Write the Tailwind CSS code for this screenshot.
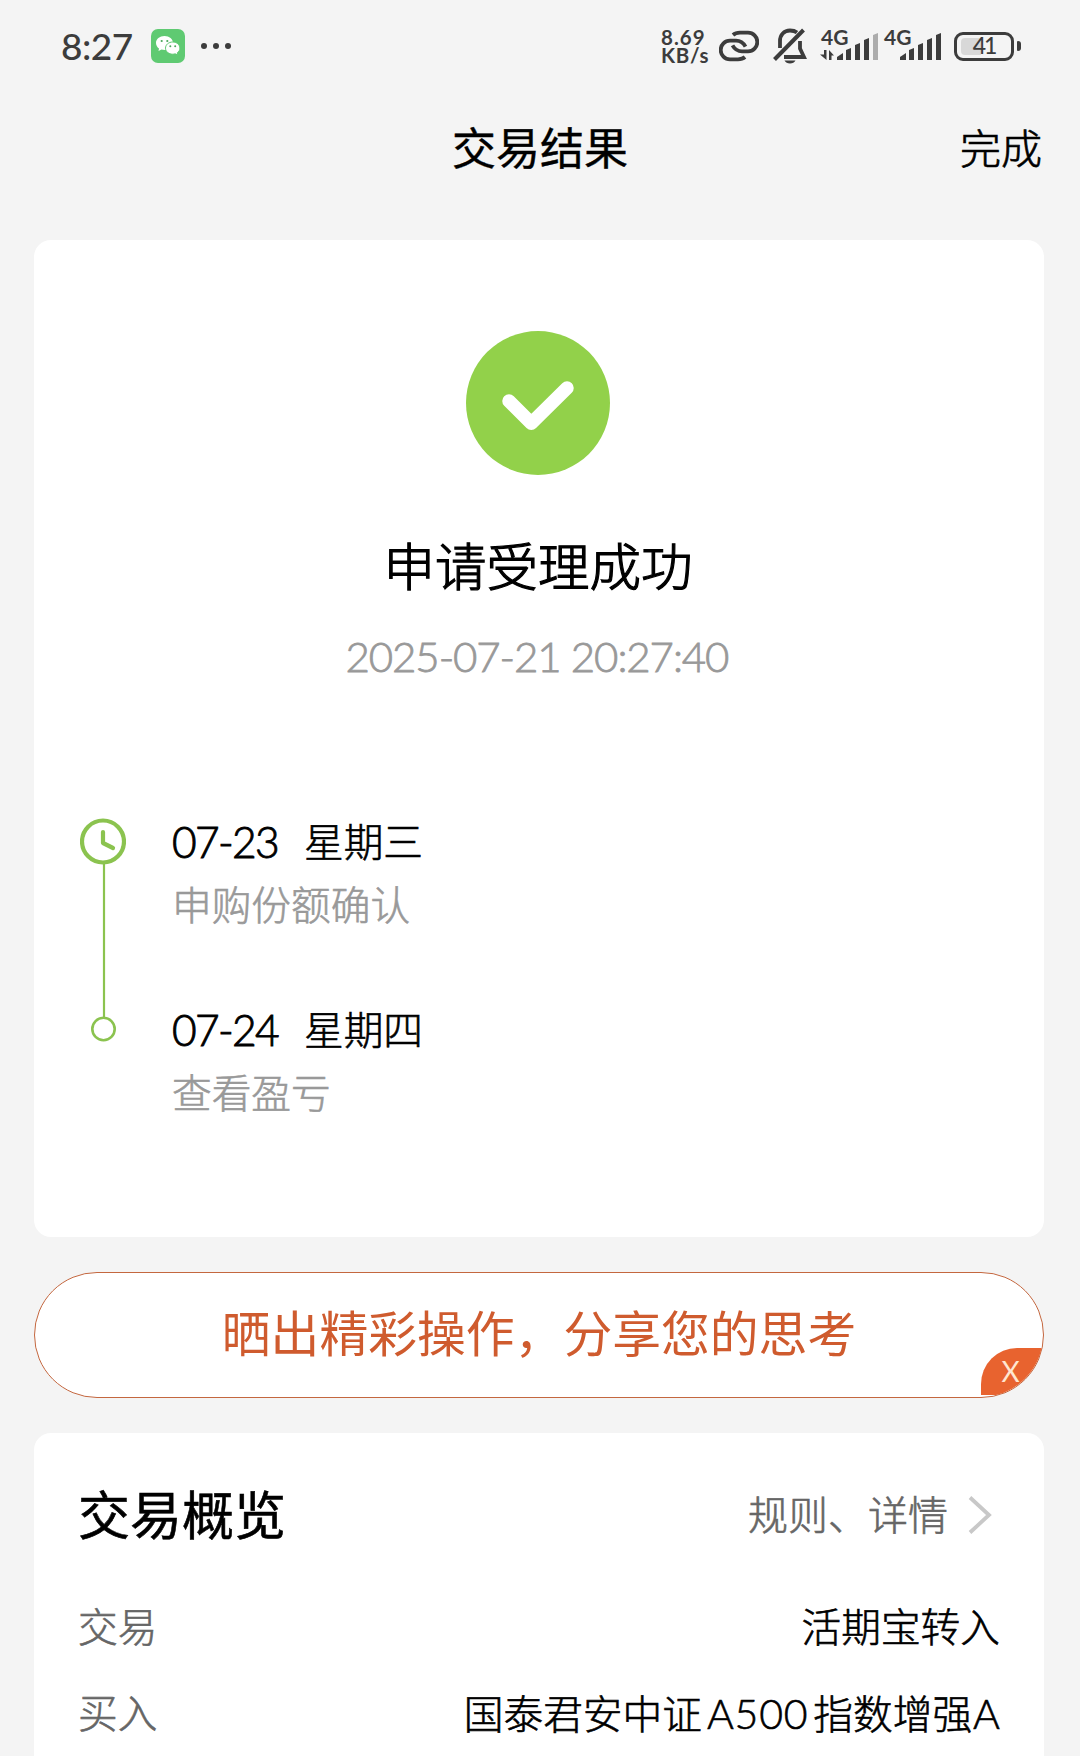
<!DOCTYPE html>
<html lang="zh-CN">
<head>
    <meta charset="UTF-8">
    <meta name="viewport" content="width=device-width, initial-scale=1.0">
    <title>交易结果</title>
    <script src="https://cdn.jsdelivr.net/npm/@tailwindcss/browser@4"></script>
</head>
<body class="bg-[#f4f4f4] text-black w-[1080px] h-[1756px] overflow-hidden font-light font-['Lato','Noto_Sans_CJK_SC',sans-serif]">

    <!-- Status bar -->
    <div class="h-[92px] pl-[61px] pr-[59px] flex items-center justify-between text-[#3c3c3c]">
        <div class="flex items-center">
            <span class="w-[90px] text-[37px] leading-none font-medium tracking-[-0.5px] -mt-[2px]">8:27</span>
            <svg class="w-[34px] h-[34px]" viewBox="0 0 34 34">
                <rect width="34" height="34" rx="7" fill="#5fca72"/>
                <path d="M13.5 7C8.700 7 5 10 5 14c0 2.200 1.200 4.200 3 5.500L7.500 22l3-1.500c1 .3 2 .4 3 .4 4.800 0 8.500-3 8.500-6.900S18.300 7 13.500 7z" fill="#fff"/>
                <path d="M21.700 13c-4 0-7.200 2.700-7.200 6.100s3.200 6.100 7.200 6.100c.9 0 1.800-.1 2.500-.4l2.600 1.400-.6-2.300c1.700-1.100 2.700-2.900 2.700-4.800 0-3.400-3.200-6.100-7.200-6.100z" fill="#fff" stroke="#5fca72" stroke-width="1"/>
                <g fill="#4aa75b"><circle cx="10.700" cy="12" r="1.100"/><circle cx="16.300" cy="12" r="1.100"/><circle cx="19.300" cy="17.300" r="1"/><circle cx="24.200" cy="17.300" r="1"/></g>
            </svg>
            <div class="flex gap-[6px] ml-[16px]">
                <span class="w-[6px] h-[6px] rounded-full bg-[#3c3c3c]"></span>
                <span class="w-[6px] h-[6px] rounded-full bg-[#3c3c3c]"></span>
                <span class="w-[6px] h-[6px] rounded-full bg-[#3c3c3c]"></span>
            </div>
        </div>

        <div class="flex items-center">
            <div class="w-[58px] text-[20.500px] leading-[18px] font-bold">
                <div class="tracking-[1px]">8.69</div>
                <div class="tracking-[0.7px]">KB/s</div>
            </div>
            <!-- Link -->
            <svg class="w-[40px] h-[32px]" viewBox="0 0 40 32" fill="none" stroke="#3c3c3c" stroke-width="3.800">
                <path d="M14 5C16 3.200 18 2.700 21 2.700h8a9.300 9.300 0 0 1 0 18.600H23c-3.500 0-7-1.500-9.500-6"/>
                <path d="M26 27c-2 1.800-4 2.300-7 2.300h-8a9.300 9.300 0 0 1 0-18.600H17c3.500 0 7 1.500 9.500 6"/>
            </svg>
            <!-- Muted bell -->
            <svg class="w-[34px] h-[36px] ml-[14px]" viewBox="0 0 34 36" fill="none" stroke="#3c3c3c" stroke-width="3.800">
                <path d="M24 4.500C22 3 19.500 2.500 17 2.500c-6 0-10 4.500-10 10.500v7"/>
                <path d="M27 13v7.500l4 8.500H11"/>
                <path d="M1.500 31.500L30.500 2" stroke-width="4"/>
                <path d="M11.500 32.500h11c-1 2-3 3-5.500 3s-4.500-1-5.500-3z" fill="#3c3c3c" stroke="none"/>
            </svg>
            <!-- SIM 1 -->
            <div class="w-[58px] h-[32px] ml-[13px] flex flex-col">
                <span class="h-[15px] pl-[1px] text-[21px] leading-[13px] font-bold">4G</span>
                <svg class="w-[58px] h-[32px] shrink-0 -mt-[15px]" viewBox="0 0 58 32" fill="#3c3c3c">
                    <path d="M4 20h2.500v10L0 24.500h4z"/>
                    <path d="M11.500 30H9V20l5 5.500h-2.500z"/>
                    <path d="M17 30v-3l6-4v7z"/>
                    <path d="M26 30V20l5-2v12z"/>
                    <path d="M35 30V15l5-2v17z"/>
                    <path d="M44 30V10l5-2v22z"/>
                    <path d="M53 30V5l5-2v27z" fill="#acacac"/>
                </svg>
            </div>
            <!-- SIM 2 -->
            <div class="w-[57px] h-[32px] ml-[6px] flex flex-col">
                <span class="h-[15px] text-[21px] leading-[13px] font-bold">4G</span>
                <svg class="w-[57px] h-[32px] shrink-0 -mt-[15px]" viewBox="0 0 57 32" fill="#3c3c3c">
                    <path d="M16 30v-3l6-4v7z"/>
                    <path d="M25 30V20l5-2v12z"/>
                    <path d="M34 30V15l5-2v17z"/>
                    <path d="M43 30V10l5-2v22z"/>
                    <path d="M52 30V5l5-2v27z"/>
                </svg>
            </div>
            <!-- Battery -->
            <div class="relative w-[60px] h-[29px] ml-[13px] border-[3px] border-[#3c3c3c] rounded-[9px] flex items-center justify-center">
                <span class="absolute left-[4px] top-[3px] w-[20px] h-[17px] rounded-l-[4px] bg-[#d8d8d8]"></span>
                <span class="relative text-[23px] leading-none font-medium tracking-[-2px] -mt-[2px]">41</span>
            </div>
            <span class="w-[4px] h-[10px] ml-[3px] rounded-r-[3px] rounded-l-[1px] bg-[#3c3c3c]"></span>
        </div>
    </div>

    <!-- Title bar -->
    <header class="relative h-[112px] flex items-center justify-center">
        <h1 class="text-[44px] leading-none font-normal [-webkit-text-stroke:0.4px]">交易结果</h1>
        <button class="absolute right-[38px] text-[41px] leading-none [-webkit-text-stroke:0.7px]">完成</button>
    </header>

    <main class="pl-[34px] pr-[36px] pt-[36px] flex flex-col gap-[35px]">

        <!-- Result card -->
        <section class="h-[997px] bg-white rounded-[17px] pt-[91px] flex flex-col items-center">
            <svg class="w-[144px] h-[144px] -ml-[2px]" viewBox="0 0 144 144" fill="none">
                <circle cx="72" cy="72" r="72" fill="#92d14a"/>
                <path d="M43 70l22.300 22.300L101 57" stroke="#fff" stroke-width="13.500" stroke-linecap="round" stroke-linejoin="round"/>
            </svg>
            <h2 class="mt-[65px] -ml-[2px] text-[51.500px] leading-[52px] [-webkit-text-stroke:1.2px]">申请受理成功</h2>
            <p class="mt-[38px] -ml-[4px] text-[42px] leading-[52px] text-[#999] tracking-[-1.1px] [-webkit-text-stroke:0.8px]">2025-07-21 20:27:40</p>

            <div class="self-stretch mt-[128px] pl-[46px] flex">
                <svg class="w-[46px] h-[234px] mt-[2px]" viewBox="0 0 46 234" fill="none" stroke="#8bc34f">
                    <circle cx="23" cy="29.500" r="21" stroke-width="4.200"/>
                    <path d="M23 20v11l10 5" stroke-width="4.200" stroke-linecap="round" stroke-linejoin="round"/>
                    <path d="M24 52v153" stroke-width="2.200"/>
                    <circle cx="23.500" cy="217" r="11.200" stroke-width="2.600"/>
                </svg>
                <div class="ml-[46px] text-[39.700px] leading-[63px] [-webkit-text-stroke:0.6px]">
                    <div class="flex">
                        <span class="w-[132px] text-[42.500px] tracking-[-1.700px] [-webkit-text-stroke:0.9px]">07-23</span>
                        <span>星期三</span>
                    </div>
                    <div class="text-[#999]">申购份额确认</div>
                    <div class="flex mt-[62px]">
                        <span class="w-[132px] text-[42.500px] tracking-[-1.700px] [-webkit-text-stroke:0.9px]">07-24</span>
                        <span>星期四</span>
                    </div>
                    <div class="text-[#999]">查看盈亏</div>
                </div>
            </div>
        </section>

        <!-- Share banner -->
        <section class="relative h-[126px] bg-white rounded-[63px] border-[1.500px] border-[#c4673f] overflow-hidden flex items-center justify-center">
            <span class="-mt-[4px] text-[48.800px] leading-none font-normal text-[#cf5b2e]">晒出精彩操作，分享您的思考</span>
            <button class="absolute right-0 bottom-[2px] w-[62px] h-[47px] rounded-tl-[36px] bg-[#e8632f] text-[#ffe6d0] text-[28px] leading-[47px] font-normal"><span class="-ml-[3px]">X</span></button>
        </section>

        <!-- Overview card -->
        <section class="h-[340px] bg-white rounded-t-[17px] px-[44px] pt-[42px] [-webkit-text-stroke:0.6px]">
            <div class="h-[80px] flex items-center justify-between">
                <h3 class="text-[52px] leading-none font-normal">交易概览</h3>
                <a class="flex items-center text-[40px] leading-none text-[#666]">
                    <span>规则、详情</span>
                    <svg class="w-[24px] h-[40px] ml-[20px] mr-[8px]" viewBox="0 0 24 40" fill="none" stroke="#c8c8c8" stroke-width="3.800">
                        <path d="M2 2.500L21 20 2 37.500"/>
                    </svg>
                </a>
            </div>
            <div class="mt-[29px] h-[86px] flex items-center justify-between text-[39.700px] leading-none">
                <span class="text-[#666]">交易</span>
                <span>活期宝转入</span>
            </div>
            <div class="h-[86px] flex items-center justify-between text-[39.700px] leading-none">
                <span class="text-[#666]">买入</span>
                <span class="flex items-baseline">国泰君安中证<span class="text-[41px] tracking-[0.800px] mx-[5px]">A500</span>指数增强<span class="text-[41px] ml-[1px]">A</span></span>
            </div>
        </section>
    </main>

</body>
</html>
